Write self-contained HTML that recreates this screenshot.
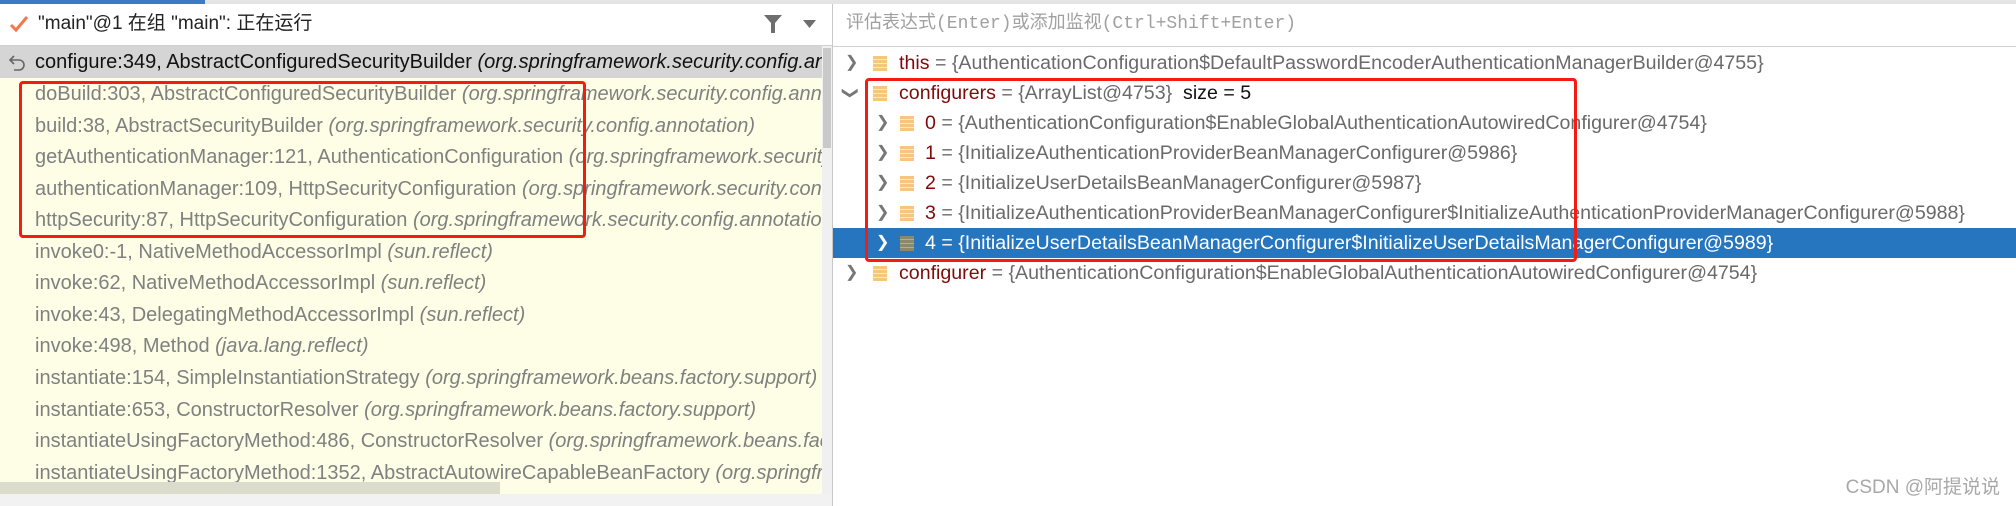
<!DOCTYPE html>
<html><head><meta charset="utf-8"><style>
*{margin:0;padding:0;box-sizing:border-box}
body{width:2016px;height:506px;overflow:hidden;background:#fff;position:relative;font-family:"Liberation Sans","Noto Sans CJK SC",sans-serif;font-size:18px}
.a{position:absolute;white-space:nowrap}
.l{position:absolute;left:0;width:822px;height:31.5px;line-height:31.5px;padding-left:35px;color:#808080;white-space:nowrap;overflow:hidden;font-size:20px}
.l i{font-style:italic}
.r{position:absolute;left:833px;right:0;height:30px;line-height:30px;white-space:nowrap;color:#6a6a6a;font-size:19.6px}
.r .n{color:#7f0a0a}
.ic{position:absolute;top:8px;width:14px;height:15px;background:repeating-linear-gradient(#f6c57f 0 3px,#fde9c8 3px 4px)}
.ch{position:absolute;top:0;color:#777;font-size:16px}
</style></head><body>
<div class="a" style="left:0;top:0;width:2016px;height:4px;background:#e4e4e4"></div>
<div class="a" style="left:0;top:0;width:205px;height:4px;background:#3d7ac6"></div>
<div class="a" style="left:0;top:45px;width:833px;height:1px;background:#d0d0d0"></div>
<div class="a" style="left:833px;top:46px;width:1183px;height:1px;background:#d0d0d0"></div>
<div class="a" style="left:832px;top:4px;width:1px;height:502px;background:#c8c8c8"></div>
<svg class="a" style="left:9px;top:14px" width="20" height="20" viewBox="0 0 20 20"><path d="M2 11 L7 16 L18 3" stroke="#f0784a" stroke-width="3" fill="none"/></svg>
<div class="a" style="left:38px;top:12px;line-height:24px;color:#222;font-size:19px">"main"@1 在组 "main": 正在运行</div>
<svg class="a" style="left:763px;top:14px" width="20" height="20" viewBox="0 0 20 20"><path d="M1 1 H19 L12 9 V19 H8 V9 Z" fill="#6e6e6e"/></svg>
<svg class="a" style="left:803px;top:20px" width="13" height="8" viewBox="0 0 13 8"><path d="M0 0 H13 L6.5 8 Z" fill="#6e6e6e"/></svg>
<div class="a" style="left:0;top:46px;width:822px;height:448px;background:#fefee6"></div>
<div class="a" style="left:0;top:46px;width:822px;height:32px;background:#d5d5d5"></div>
<svg class="a" style="left:8px;top:54px" width="20" height="18" viewBox="0 0 20 18"><path d="M6 2 L2 6 L6 10 M2 6 H11 A5 5 0 0 1 11 16 H6" stroke="#666" stroke-width="1.6" fill="none"/></svg>
<div class="l" style="top:47px;color:#111">configure:349, AbstractConfiguredSecurityBuilder <i>(org.springframework.security.config.annotation)</i></div>
<div class="l" style="top:79px">doBuild:303, AbstractConfiguredSecurityBuilder <i>(org.springframework.security.config.annotation)</i></div>
<div class="l" style="top:111px">build:38, AbstractSecurityBuilder <i>(org.springframework.security.config.annotation)</i></div>
<div class="l" style="top:142px">getAuthenticationManager:121, AuthenticationConfiguration <i>(org.springframework.security.config)</i></div>
<div class="l" style="top:174px">authenticationManager:109, HttpSecurityConfiguration <i>(org.springframework.security.config)</i></div>
<div class="l" style="top:205px">httpSecurity:87, HttpSecurityConfiguration <i>(org.springframework.security.config.annotation.web)</i></div>
<div class="l" style="top:237px">invoke0:-1, NativeMethodAccessorImpl <i>(sun.reflect)</i></div>
<div class="l" style="top:268px">invoke:62, NativeMethodAccessorImpl <i>(sun.reflect)</i></div>
<div class="l" style="top:300px">invoke:43, DelegatingMethodAccessorImpl <i>(sun.reflect)</i></div>
<div class="l" style="top:331px">invoke:498, Method <i>(java.lang.reflect)</i></div>
<div class="l" style="top:363px">instantiate:154, SimpleInstantiationStrategy <i>(org.springframework.beans.factory.support)</i></div>
<div class="l" style="top:395px">instantiate:653, ConstructorResolver <i>(org.springframework.beans.factory.support)</i></div>
<div class="l" style="top:426px">instantiateUsingFactoryMethod:486, ConstructorResolver <i>(org.springframework.beans.factory.support)</i></div>
<div class="l" style="top:458px">instantiateUsingFactoryMethod:1352, AbstractAutowireCapableBeanFactory <i>(org.springframework.beans)</i></div>
<div class="a" style="left:822px;top:46px;width:10px;height:448px;background:#f0f0f0"></div>
<div class="a" style="left:823px;top:48px;width:8px;height:100px;background:#c9c9c9"></div>
<div class="a" style="left:0;top:494px;width:832px;height:12px;background:#f2f2f2"></div>
<div class="a" style="left:0;top:482px;width:500px;height:12px;background:#dcdccc"></div>
<div class="a" style="left:19px;top:81px;width:567px;height:157px;border:3.5px solid #f41c12;border-radius:4px"></div>
<div class="a" style="left:846px;top:12px;line-height:24px;color:#a0a0a0;font-family:'Liberation Mono','Noto Sans CJK SC',monospace;font-size:18px">评估表达式(Enter)或添加监视(Ctrl+Shift+Enter)</div>
<div class="r" style="top:48px"><span class="ch" style="left:12px">&#x276F;</span><div class="ic" style="left:40px"></div><span style="position:absolute;left:66px"><span class="n">this</span> = {AuthenticationConfiguration$DefaultPasswordEncoderAuthenticationManagerBuilder@4755}</span></div>
<div class="r" style="top:78px"><span class="ch" style="left:10px;transform:rotate(90deg)">&#x276F;</span><div class="ic" style="left:40px"></div><span style="position:absolute;left:66px"><span class="n">configurers</span> = {ArrayList@4753} &nbsp;<span style="color:#111">size = 5</span></span></div>
<div class="r" style="top:108px"><span class="ch" style="left:43px">&#x276F;</span><div class="ic" style="left:67px"></div><span style="position:absolute;left:92px"><span class="n">0</span> = {AuthenticationConfiguration$EnableGlobalAuthenticationAutowiredConfigurer@4754}</span></div>
<div class="r" style="top:138px"><span class="ch" style="left:43px">&#x276F;</span><div class="ic" style="left:67px"></div><span style="position:absolute;left:92px"><span class="n">1</span> = {InitializeAuthenticationProviderBeanManagerConfigurer@5986}</span></div>
<div class="r" style="top:168px"><span class="ch" style="left:43px">&#x276F;</span><div class="ic" style="left:67px"></div><span style="position:absolute;left:92px"><span class="n">2</span> = {InitializeUserDetailsBeanManagerConfigurer@5987}</span></div>
<div class="r" style="top:198px"><span class="ch" style="left:43px">&#x276F;</span><div class="ic" style="left:67px"></div><span style="position:absolute;left:92px"><span class="n">3</span> = {InitializeAuthenticationProviderBeanManagerConfigurer$InitializeAuthenticationProviderManagerConfigurer@5988}</span></div>
<div class="r" style="top:228px;background:#2675bf;color:#fff"><span class="ch" style="left:43px;color:#fff">&#x276F;</span><div class="ic" style="left:67px;background:repeating-linear-gradient(#8a8a6a 0 3px,#b0b090 3px 4px)"></div><span style="position:absolute;left:92px">4 = {InitializeUserDetailsBeanManagerConfigurer$InitializeUserDetailsManagerConfigurer@5989}</span></div>
<div class="r" style="top:258px"><span class="ch" style="left:12px">&#x276F;</span><div class="ic" style="left:40px"></div><span style="position:absolute;left:66px"><span class="n">configurer</span> = {AuthenticationConfiguration$EnableGlobalAuthenticationAutowiredConfigurer@4754}</span></div>
<div class="a" style="left:865px;top:78px;width:712px;height:184px;border:3.5px solid #f41c12;border-radius:4px"></div>
<div class="a" style="right:16px;top:476px;line-height:24px;color:#a8a8a8;font-size:19px">CSDN @阿提说说</div>
</body></html>
